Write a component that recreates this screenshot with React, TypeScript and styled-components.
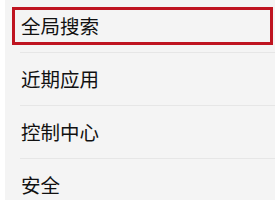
import React from "react";
import styled, { createGlobalStyle } from "styled-components";

const Global = createGlobalStyle`
  html, body { margin: 0; padding: 0; background: #ffffff; }
  body { font-family: "Noto Sans CJK SC", "Noto Sans", sans-serif; }
`;

const Page = styled.div`
  width: 275px;
  height: 200px;
  padding-left: 5px;
  box-sizing: border-box;
  background: #ffffff;
  overflow: hidden;
`;

const List = styled.div`
  display: flex;
  flex-direction: column;
  background: #f4f4f4;
  height: 100%;
`;

const Row = styled.div<{ $focused?: boolean }>`
  position: relative;
  height: 53px;
  display: flex;
  align-items: center;
  padding-left: 16px;
  padding-bottom: 2px;
  box-sizing: border-box;
  font-size: 19.5px;
  font-weight: 400;
  color: #111111;
  flex-shrink: 0;
  &::before {
    content: "";
    position: absolute;
    left: 15px;
    right: 0;
    bottom: 0;
    height: 1px;
    background: #e6e6e6;
  }
  ${(p) =>
    p.$focused &&
    `
    &::after {
      content: "";
      position: absolute;
      left: 7px;
      right: 2px;
      top: 7px;
      height: 38px;
      border: 3px solid #bf1420;
      box-sizing: border-box;
    }
  `}
`;

const items = ["全局搜索", "近期应用", "控制中心", "安全"];

export default function App() {
  return (
    <>
      <Global />
      <Page>
        <List>
          {items.map((t, i) => (
            <Row key={t} $focused={i === 0}>
              {t}
            </Row>
          ))}
        </List>
      </Page>
    </>
  );
}
